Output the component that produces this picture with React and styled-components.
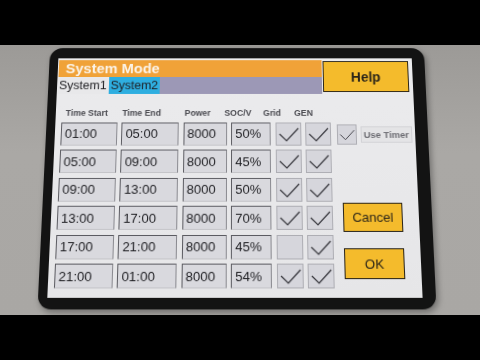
import styled, { createGlobalStyle } from 'styled-components'

const GlobalStyle = createGlobalStyle`
    html, body {
        margin: 0;
        padding: 0;
        background: #000;
        width: 480px;
        height: 360px;
        overflow: hidden;
        font-family: "Liberation Sans", Arial, sans-serif;
    }
`;

const Page = styled.div`
    display: flex;
    flex-direction: column;
    width: 480px;
    height: 360px;
`;

const Letterbox = styled.div`
    height: 45px;
    background: #000;
`;

const Wall = styled.div`
    height: 270px;
    background: linear-gradient(180deg, #9c9a97 0%, #aaa8a5 40%, #a9a7a4 100%);
    display: flex;
    justify-content: center;
    align-items: center;
    padding-right: 6px;
`;

const Device = styled.div`
    box-sizing: border-box;
    width: 386px;
    height: 265px;
    background: #131313;
    border-radius: 13px;
    padding: 11px 13px 11px 9px;
    display: flex;
    transform: translateY(-6px) perspective(700px) rotateX(10deg);
    box-shadow: 2px 3px 6px rgba(0, 0, 0, 0.35);
`;

const Screen = styled.div`
    flex: 1;
    background: linear-gradient(180deg, #ebebed 0%, #e6e6e8 100%);
    display: flex;
    flex-direction: column;
`;

const TopRow = styled.div`
    display: flex;
    align-items: flex-start;
`;

const HeaderBlock = styled.div`
    width: 271px;
    margin-top: 2px;
    display: flex;
    flex-direction: column;
`;

const TitleBar = styled.div`
    height: 18px;
    margin-left: 1px;
    background: #f0a238;
    color: #fbf4ea;
    font-size: 15px;
    font-weight: 700;
    line-height: 18px;
    padding-left: 7px;
`;

const TabBar = styled.div`
    height: 18px;
    display: flex;
    background: #9c98b6;
`;

const Tab = styled.div`
    font-size: 12.5px;
    line-height: 18px;
    padding: 0 2px;
    color: #1e1e22;
    background: ${p => (p.$active ? '#2eaee0' : '#e8e8ea')};
`;

const YellowButton = styled.div`
    box-sizing: border-box;
    width: ${p => p.$w}px;
    height: ${p => p.$h}px;
    background: #f4bb2c;
    border: 1px solid #2a2418;
    color: #2a2418;
    font-size: ${p => p.$size}px;
    font-weight: ${p => p.$weight || 400};
    display: flex;
    align-items: center;
    justify-content: center;
`;

const HelpButton = styled(YellowButton)`
    margin: 3px 0 0 1px;
`;

const Body = styled.div`
    display: flex;
    align-items: flex-start;
    margin-top: 15px;
    padding-left: 6px;
`;

const Table = styled.div`
    display: grid;
    grid-template-columns: 57px 58px 44px 40px 26px 26px;
    grid-template-rows: 10px repeat(6, 24px);
    column-gap: 4.4px;
    row-gap: 4.5px;
`;

const ColHead = styled.div`
    font-size: 8.8px;
    font-weight: 700;
    color: #4a4a50;
    line-height: 10px;
    white-space: nowrap;
    margin-left: ${p => p.$shift || 0}px;
`;

const ValueCell = styled.div`
    box-sizing: border-box;
    background: #d9d9de;
    border-top: 1px solid #5c5c62;
    border-left: 1px solid #5c5c62;
    border-right: 1px solid #8a8a90;
    border-bottom: 1px solid #c4c4c8;
    font-size: 13px;
    color: #222226;
    display: flex;
    align-items: center;
    padding-left: 3px;
`;

const CheckCell = styled.div`
    box-sizing: border-box;
    width: ${p => p.$w || 26}px;
    height: ${p => p.$h || 24}px;
    background: #d6d6dc;
    border: 1px solid #aeaeb4;
    display: flex;
    align-items: center;
    justify-content: center;
`;

const Side = styled.div`
    display: flex;
    flex-direction: column;
    margin-left: 6px;
    padding-top: 17px;
`;

const TimerRow = styled.div`
    display: flex;
    align-items: center;
    gap: 4px;
`;

const TimerLabel = styled.div`
    box-sizing: border-box;
    height: 17px;
    padding: 0 2px;
    background: #e4e4e6;
    border: 1px solid #d2d2d6;
    color: #6c6c72;
    font-size: 9.5px;
    font-weight: 700;
    display: flex;
    align-items: center;
`;

const CancelButton = styled(YellowButton)`
    margin: 59px 0 0 4px;
`;

const OkButton = styled(YellowButton)`
    margin: 16px 0 0 4px;
`;

function Check({ w = 26, h = 24 }) {
    return (
        <svg width={w - 2} height={h - 2} viewBox="0 0 24 22">
            <polyline points="3,11 10,18 22,5" fill="none" stroke="#36363c" strokeWidth="1.2" />
        </svg>
    )
}

const rows = [
    ['01:00', '05:00', '8000', '50%', true, true],
    ['05:00', '09:00', '8000', '45%', true, true],
    ['09:00', '13:00', '8000', '50%', true, true],
    ['13:00', '17:00', '8000', '70%', true, true],
    ['17:00', '21:00', '8000', '45%', false, true],
    ['21:00', '01:00', '8000', '54%', true, true],
]

export default function App() {
    return (
        <Page>
            <GlobalStyle />
            <Letterbox />
            <Wall>
                <Device>
                    <Screen>
                        <TopRow>
                            <HeaderBlock>
                                <TitleBar>System Mode</TitleBar>
                                <TabBar>
                                    <Tab>System1</Tab>
                                    <Tab $active>System2</Tab>
                                </TabBar>
                            </HeaderBlock>
                            <HelpButton $w={88} $h={33} $size={14} $weight={700}>Help</HelpButton>
                        </TopRow>
                        <Body>
                            <Table>
                                <ColHead $shift={4}>Time Start</ColHead>
                                <ColHead>Time End</ColHead>
                                <ColHead $shift={1}>Power</ColHead>
                                <ColHead $shift={-7}>SOC/V</ColHead>
                                <ColHead $shift={-12}>Grid</ColHead>
                                <ColHead $shift={-11}>GEN</ColHead>
                                {rows.map((r, i) => [
                                    <ValueCell key={i + 'a'}>{r[0]}</ValueCell>,
                                    <ValueCell key={i + 'b'}>{r[1]}</ValueCell>,
                                    <ValueCell key={i + 'c'}>{r[2]}</ValueCell>,
                                    <ValueCell key={i + 'd'}>{r[3]}</ValueCell>,
                                    <CheckCell key={i + 'e'}>{r[4] && <Check />}</CheckCell>,
                                    <CheckCell key={i + 'f'}>{r[5] && <Check />}</CheckCell>,
                                ])}
                            </Table>
                            <Side>
                                <TimerRow>
                                    <CheckCell $w={20} $h={21}><Check w={20} h={21} /></CheckCell>
                                    <TimerLabel>Use Timer</TimerLabel>
                                </TimerRow>
                                <CancelButton $w={59} $h={29} $size={13}>Cancel</CancelButton>
                                <OkButton $w={59} $h={30} $size={13}>OK</OkButton>
                            </Side>
                        </Body>
                    </Screen>
                </Device>
            </Wall>
            <Letterbox />
        </Page>
    )
}
